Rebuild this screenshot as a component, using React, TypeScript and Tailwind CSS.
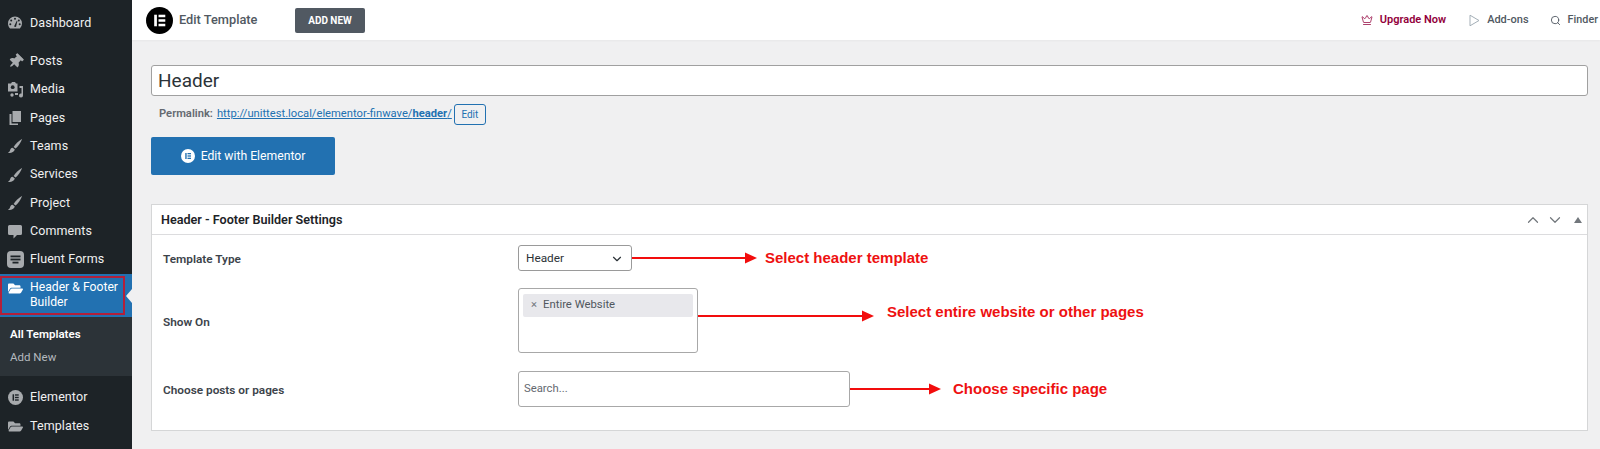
import type { ReactNode } from 'react'
import { ChevronDown, ChevronUp, Crown, Search } from 'lucide-react'
import { FaFolderOpen, FaThumbtack } from 'react-icons/fa'

const ui = { fontFamily: 'Roboto, "Noto Sans", sans-serif' }

function ElementorMark({ size, bg, fg }: { size: number; bg: string; fg: string }) {
  return (
    <svg width={size} height={size} viewBox="0 0 28 28">
      <circle cx="14" cy="14" r="14" fill={bg} />
      <rect x="8.5" y="8" width="2.8" height="12" fill={fg} />
      <rect x="13" y="8" width="7" height="2.6" fill={fg} />
      <rect x="13" y="12.7" width="7" height="2.6" fill={fg} />
      <rect x="13" y="17.4" width="7" height="2.6" fill={fg} />
    </svg>
  )
}

function GaugeIcon() {
  return (
    <svg width="16" height="16" viewBox="0 0 16 16" fill="#a7aaad">
      <path d="M8 1.5a7 7 0 0 0-7 7c0 1.9.8 3.7 2.1 5h9.8A7 7 0 0 0 15 8.5a7 7 0 0 0-7-7z" />
      <circle cx="8" cy="3.8" r="1" fill="#1d2327" />
      <circle cx="4.2" cy="5.6" r="1" fill="#1d2327" />
      <circle cx="11.8" cy="5.6" r="1" fill="#1d2327" />
      <circle cx="3.3" cy="9.3" r="1" fill="#1d2327" />
      <circle cx="12.7" cy="9.3" r="1" fill="#1d2327" />
      <path d="M7 11.5 9.8 5.8l.6.3L9 12z" fill="#1d2327" />
    </svg>
  )
}

function MediaIcon() {
  return (
    <svg width="17" height="17" viewBox="0 0 17 17" fill="#a7aaad">
      <path d="M1 2.5h3l1-1.5h3l1 1.5h1.5v8H1z" />
      <circle cx="5.7" cy="6.2" r="1.9" fill="#1d2327" />
      <path d="M12.5 5H16v9.5a2 2 0 1 1-1.5-1.9V7h-2z" />
      <circle cx="5" cy="14" r="1.7" />
      <path d="M8 12h3v2H8z" />
    </svg>
  )
}

function PagesIcon() {
  return (
    <svg width="16" height="16" viewBox="0 0 16 16" fill="#a7aaad">
      <path d="M5.5 1H14v11H5.5z" />
      <path d="M2.5 4h2v9.5H11V15H2.5z" />
    </svg>
  )
}

function BrushIcon() {
  return (
    <svg width="16" height="16" viewBox="0 0 16 16" fill="#a7aaad">
      <path d="M15.2.8C12 2.8 8.2 6 6.6 9l2 1.6C11 8.6 14 4.6 15.2.8z" />
      <path d="M5.7 9.8c-2 0-2.3 1.7-2.8 3-.4 1-1.3 1.6-2 2 2.6.6 6.3-.4 6.9-3.3z" />
    </svg>
  )
}

function CommentIcon() {
  return (
    <svg width="16" height="16" viewBox="0 0 16 16" fill="#a7aaad">
      <path d="M2.5 2h11A1.5 1.5 0 0 1 15 3.5v7a1.5 1.5 0 0 1-1.5 1.5H10l-3.5 3.5V12h-4A1.5 1.5 0 0 1 1 10.5v-7A1.5 1.5 0 0 1 2.5 2z" />
    </svg>
  )
}

function FormsIcon() {
  return (
    <svg width="17" height="17" viewBox="0 0 17 17">
      <rect width="17" height="17" rx="4" fill="#a7aaad" />
      <rect x="3.5" y="4.5" width="10" height="1.8" fill="#1d2327" />
      <rect x="3.5" y="7.6" width="10" height="1.8" fill="#1d2327" />
      <rect x="5.5" y="10.7" width="6" height="1.8" fill="#1d2327" />
    </svg>
  )
}

function MenuItem({ icon, label }: { icon: ReactNode; label: string }) {
  return (
    <div className="flex h-[28.3px] items-center">
      <span className="flex w-[30px] shrink-0 justify-center">{icon}</span>
      <span className="text-[12.5px] tracking-[0.1px] text-[#f0f0f1]">{label}</span>
    </div>
  )
}

function Sidebar() {
  return (
    <aside className="flex w-[132px] shrink-0 flex-col bg-[#1d2327] pt-[9px]">
      <MenuItem icon={<GaugeIcon />} label="Dashboard" />
      <div className="h-[10px]" />
      <MenuItem icon={<FaThumbtack size={15} color="#a7aaad" className="rotate-45" />} label="Posts" />
      <MenuItem icon={<MediaIcon />} label="Media" />
      <MenuItem icon={<PagesIcon />} label="Pages" />
      <MenuItem icon={<BrushIcon />} label="Teams" />
      <MenuItem icon={<BrushIcon />} label="Services" />
      <MenuItem icon={<BrushIcon />} label="Project" />
      <MenuItem icon={<CommentIcon />} label="Comments" />
      <MenuItem icon={<FormsIcon />} label="Fluent Forms" />

      <div className="relative flex h-[43px] bg-[#2271b1] pt-[6px]">
        <span className="flex w-[30px] shrink-0 justify-center pt-[1px]">
          <FaFolderOpen size={15} color="#fff" />
        </span>
        <span className="text-[12.2px] leading-[15.5px] text-white">Header &amp; Footer Builder</span>
        <span className="absolute right-0 top-[15px] border-y-[7px] border-r-[6px] border-y-transparent border-r-[#f0f0f1]" />
        <span className="absolute left-0 top-[2px] bottom-[2px] w-[125px] border-[2px] border-[#b3203a]" />
      </div>

      <div className="flex h-[59px] flex-col bg-[#2c3338] pl-[10px] pt-[9px] text-[11.5px]">
        <span className="h-[23px] font-semibold text-white">All Templates</span>
        <span className="text-[#b4b9be]">Add New</span>
      </div>

      <div className="h-[8px]" />
      <MenuItem icon={<ElementorMark size={15} bg="#a7aaad" fg="#1d2327" />} label="Elementor" />
      <MenuItem icon={<FaFolderOpen size={15} color="#a7aaad" />} label="Templates" />
    </aside>
  )
}

function TopBar() {
  return (
    <header className="flex h-[40px] shrink-0 items-center bg-white pl-[14px] pr-[2px] shadow-[0_1px_2px_rgba(0,0,0,0.04)]">
      <ElementorMark size={27} bg="#000" fg="#fff" />
      <span className="ml-[6px] w-[80px] text-[12.8px] font-medium text-[#515962]">Edit Template</span>
      <button className="ml-[36px] h-[25px] w-[70px] rounded-[2px] bg-[#515962] text-[10px] font-bold text-white">ADD NEW</button>
      <div className="ml-auto flex items-center font-medium">
        <Crown size={12} color="#92003b" strokeWidth={1.5} />
        <span className="ml-[7px] text-[11px] font-semibold text-[#92003b]">Upgrade Now</span>
        <svg className="ml-[23px]" width="11" height="13" viewBox="0 0 11 13" fill="none" stroke="#a4afb7" strokeWidth="1">
          <path d="M1 1.2 10 6.5 1 11.8z" />
        </svg>
        <span className="ml-[7px] text-[11px] text-[#515962]">Add-ons</span>
        <Search size={11} color="#515962" className="ml-[21px]" />
        <span className="ml-[7px] text-[10.8px] text-[#515962]">Finder</span>
      </div>
    </header>
  )
}

function Arrow({ length, className = '' }: { length: number; className?: string }) {
  return (
    <svg width={length} height="12" viewBox={`0 0 ${length} 12`} className={`shrink-0 ${className}`}>
      <rect x="0" y="5" width={length - 10} height="2" fill="#f20d0d" />
      <path d={`M${length - 12} 0.5 L${length} 6 L${length - 12} 11.5z`} fill="#f20d0d" />
    </svg>
  )
}

function Note({ children }: { children: ReactNode }) {
  return (
    <span className="text-[15px] font-bold text-[#ee1111]" style={{ fontFamily: '"Liberation Sans", sans-serif' }}>
      {children}
    </span>
  )
}

const labelClass = 'w-[355px] shrink-0 text-[11.8px] font-semibold text-[#3c434a]'

function SettingsBox() {
  return (
    <section className="mt-[29px] h-[227px] border border-[#d5d6d7] bg-white">
      <div className="flex h-[30px] items-center justify-between border-b border-[#dcdcde] pl-[9px] pr-[5px]">
        <span className="pt-[1px] text-[12.6px] font-semibold text-[#1d2327]">Header - Footer Builder Settings</span>
        <div className="flex items-center gap-[4px] text-[#72777c]">
          <ChevronUp size={18} strokeWidth={1.6} />
          <ChevronDown size={18} strokeWidth={1.6} />
          <span className="ml-[6px] border-x-[4px] border-b-[6px] border-x-transparent border-b-[#72777c]" />
        </div>
      </div>

      <div className="flex h-[46px] items-center pl-[11px]">
        <span className={`${labelClass} pt-[3px]`}>Template Type</span>
        <div className="flex h-[26px] w-[114px] items-center justify-between rounded-[3px] border border-[#9a9a9a] px-[7px] pt-[1px] text-[11.8px] text-[#2c3338]">
          Header
          <ChevronDown size={14} />
        </div>
        <Arrow length={125} />
        <span className="ml-[8px]"><Note>Select header template</Note></span>
      </div>

      <div className="mt-[6px] flex h-[66px] items-center pl-[11px]">
        <span className={`${labelClass} pt-[5px]`}>Show On</span>
        <div className="h-[65px] w-[180px] rounded-[3px] border border-[#a8a8a8] px-[4px] pt-[5px]">
          <div className="flex h-[23px] items-center rounded-[2px] bg-[#e8e8ec] pl-[8px] text-[11.3px] text-[#50575e]">
            <span className="mr-[6px] text-[#72777c]">×</span>Entire Website
          </div>
        </div>
        <Arrow length={176} className="mb-[8px]" />
        <span className="ml-[13px] mb-[16px]"><Note>Select entire website or other pages</Note></span>
      </div>

      <div className="mt-[18px] flex h-[36px] items-center pl-[11px]">
        <span className={`${labelClass} pt-[3px]`}>Choose posts or pages</span>
        <div className="flex h-[36px] w-[332px] items-center rounded-[3px] border border-[#a8a8a8] pl-[5px] text-[11.3px] text-[#646970]">Search...</div>
        <Arrow length={91} />
        <span className="ml-[12px]"><Note>Choose specific page</Note></span>
      </div>
    </section>
  )
}

export default function App() {
  return (
    <div className="flex h-[449px] w-[1600px] overflow-hidden bg-[#f0f0f1]" style={ui}>
      <Sidebar />
      <main className="flex min-w-0 flex-1 flex-col">
        <TopBar />
        <div className="flex flex-col pl-[19px] pr-[12px] pt-[25px]">
          <div className="flex h-[31px] items-center rounded-[3px] border border-[#a0a0a0] bg-white pl-[6px] pt-[2px] text-[19px] text-[#2c3338]">Header</div>
          <div className="mt-[8px] flex h-[21px] items-center pl-[8px] text-[11.2px]">
            <span className="font-semibold text-[#646970]">Permalink:</span>
            <a className="ml-[4px] text-[#2271b1] underline">http://unittest.local/elementor-finwave/<b>header</b>/</a>
            <span className="ml-[2px] flex h-[21px] w-[32px] items-center justify-center rounded-[3px] border border-[#2271b1] text-[10px] text-[#2271b1]">Edit</span>
          </div>
          <button className="mt-[12px] flex h-[38px] w-[184px] items-center justify-center gap-[6px] rounded-[2px] bg-[#2271b1] text-[12.2px] text-white">
            <ElementorMark size={14} bg="#fff" fg="#2271b1" />
            Edit with Elementor
          </button>
          <SettingsBox />
        </div>
      </main>
    </div>
  )
}
